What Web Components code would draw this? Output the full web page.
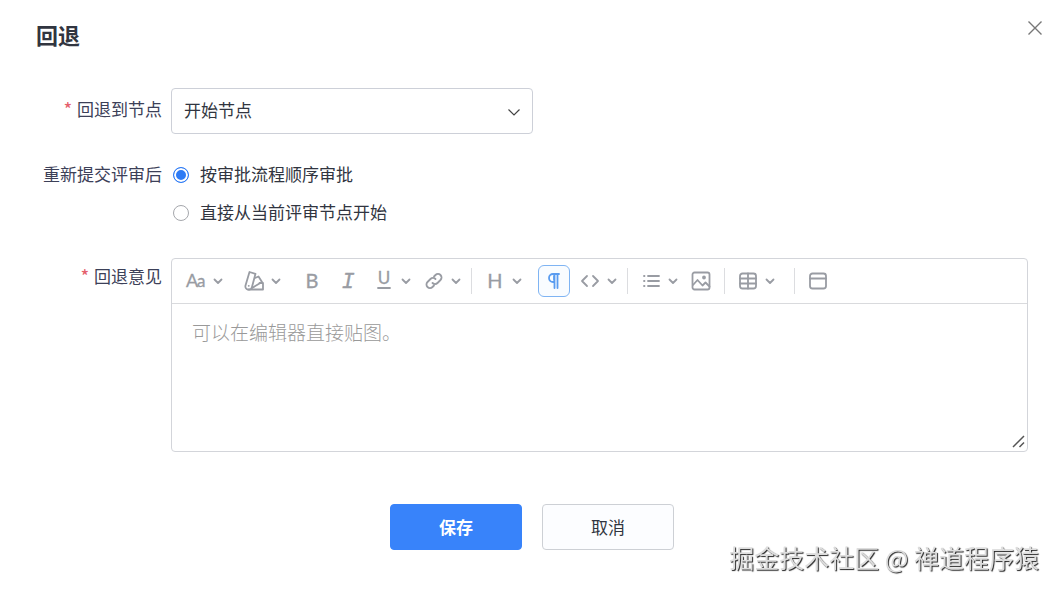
<!DOCTYPE html>
<html lang="zh-CN">
<head>
<meta charset="UTF-8">
<meta name="viewport" content="width=device-width, initial-scale=1">
<title>回退</title>
<style>
    body {
        margin: 0;
        background: #fff;
        color: #313540;
        font-family: "Noto Sans CJK SC", "Noto Sans", sans-serif;
        font-size: 17px;
    }
</style>
</head>
<body>
<rollback-dialog></rollback-dialog>
<water-mark>掘金技术社区 @ 禅道程序猿</water-mark>

<script>
const icons = {
    font: '<text x="0" y="16" font-size="18" font-family="Lato">A</text><text x="11" y="16" font-size="17" font-family="Lato">a</text>',
    color: '<path d="M5.500 1l6 1.800-3.600 13.400A3.300 3.300 0 0 1 1.500 14.500z"/><path d="M11 7l3.500-1.500 3.500 5.500-10 6"/><path d="M15.500 12h3.500v6.500H4.500"/><path d="M4.700 14.800h.1"/>',
    bold: '<text x="10" y="17" font-size="20" text-anchor="middle" font-family="Lato">B</text>',
    italic: '<text x="10" y="17" font-size="22" text-anchor="middle" font-family="Liberation Mono" font-style="italic">I</text>',
    underline: '<text x="10" y="13" font-size="17" text-anchor="middle" font-family="Lato">U</text><path d="M4 17h12"/>',
    link: '<path d="M8.500 12a3.500 3.500 0 0 0 5 0l3-3a3.500 3.500 0 0 0-5-5L10 5.500"/><path d="M11.500 8a3.500 3.500 0 0 0-5 0l-3 3a3.500 3.500 0 0 0 5 5l1.500-1.500"/>',
    heading: '<text x="10" y="17" font-size="20" text-anchor="middle" font-family="Lato">H</text>',
    paragraph: '<path d="M15 3H9a4 4 0 0 0 0 8h1.500M10.500 3v14M13.500 3v14M10 5v4"/>',
    code: '<path d="M7 5l-5 5 5 5M13 5l5 5-5 5"/>',
    list: '<path d="M7 5h11M7 10h11M7 15h11M3 5h.5M3 10h.5M3 15h.5"/>',
    image: '<rect x="1.500" y="1.500" width="17" height="17" rx="2"/><path d="M2 14l4.500-5 5 5.500 3-3 4 4"/><circle cx="13" cy="6.500" r="1"/>',
    table: '<rect x="2" y="2.500" width="16" height="15" rx="2.500"/><path d="M2 7.500h16M2 12.500h16M10 2.500v15"/>',
    panel: '<rect x="2" y="2.500" width="16" height="15" rx="2.500"/><path d="M2 7.500h16"/>'
};

class RollbackDialog extends HTMLElement {
    constructor() {
        super();
        this.attachShadow({ mode: 'open' });
        this.shadowRoot.innerHTML = `
            <style>
                :host { display: block; }
                header {
                    display: flex; justify-content: space-between; align-items: flex-start;
                    padding: 20px 15px 0 36px;
                    margin-bottom: 40px;
                }
                h1 { margin: 0; font-size: 22px; line-height: 28px; color: #313540; }
                .close {
                    display: block; padding: 0; border: 0;
                    background: none; color: #777; cursor: pointer;
                }
                .close svg { display: block; }
                form { padding: 0 30px 0 36px; }
                label, .label { color: #3c4058; }
                .required::before {
                    content: "*"; color: #e5606c;
                    font-weight: 500;
                    margin-right: 5px;
                }
                select {
                    appearance: none;
                    display: block; box-sizing: border-box;
                    width: 100%; height: 46px;
                    padding: 0 40px 4px 12px;
                    border: 1px solid #cdd0d8; border-radius: 4px;
                    background: #fff; color: #313540;
                    font: inherit;
                }
                .option {
                    display: flex; align-items: center;
                    padding-bottom: 2px;
                    line-height: 36px; color: #313540;
                }
                input[type=radio] {
                    appearance: none;
                    box-sizing: border-box;
                    width: 16px; height: 16px;
                    margin: 2px 11px 0 2px;
                    border: 1px solid #a5a7ac; border-radius: 50%;
                }
                input[type=radio]:checked {
                    border-color: #2e7bf5; background: #2e7bf5;
                    box-shadow: inset 0 0 0 2px #fff;
                }
                textarea {
                    display: block; box-sizing: border-box;
                    width: 100%; height: 147px;
                    padding: 15px 20px;
                    border: 0; outline: 0; resize: none; background: none;
                    font: inherit; font-size: 19px; line-height: 26px;
                }
                textarea::placeholder { color: #999; font-weight: 300; }
                footer { display: flex; justify-content: center; gap: 20px; margin-top: 52px; }
            </style>
            <header>
                <h1>回退</h1>
                <button class="close" type="button" aria-label="关闭">
                    <svg width="16" height="16" fill="none" stroke="currentColor" stroke-width="1.4"><path d="M1.500 1.500l13 13M14.500 1.500l-13 13"/></svg>
                </button>
            </header>
            <form>
                <form-row tall>
                    <label slot="label" class="required" for="node">回退到节点</label>
                    <select-box>
                        <select id="node"><option>开始节点</option></select>
                    </select-box>
                </form-row>
                <form-row>
                    <span slot="label" class="label" id="after">重新提交评审后</span>
                    <div role="radiogroup" aria-labelledby="after">
                        <label class="option"><input type="radio" name="after" checked>按审批流程顺序审批</label>
                        <label class="option"><input type="radio" name="after">直接从当前评审节点开始</label>
                    </div>
                </form-row>
                <form-row>
                    <label slot="label" class="required" for="opinion">回退意见</label>
                    <rich-editor>
                        <textarea id="opinion" placeholder="可以在编辑器直接贴图。"></textarea>
                    </rich-editor>
                </form-row>
                <footer>
                    <action-button primary>保存</action-button>
                    <action-button>取消</action-button>
                </footer>
            </form>
        `;
    }
}

class FormRow extends HTMLElement {
    constructor() {
        super();
        this.attachShadow({ mode: 'open' });
        this.shadowRoot.innerHTML = `
            <style>
                :host {
                    display: grid; grid-template-columns: 126px minmax(0, 1fr);
                    column-gap: 9px;
                    margin-bottom: 26px;
                }
                :host([tall]) { margin-bottom: 22px; }
                .name { text-align: right; line-height: 36px; white-space: nowrap; }
                :host([tall]) .name { line-height: 42px; }
            </style>
            <div class="name"><slot name="label"></slot></div>
            <div><slot></slot></div>
        `;
    }
}

class SelectBox extends HTMLElement {
    constructor() {
        super();
        this.attachShadow({ mode: 'open' });
        this.shadowRoot.innerHTML = `
            <style>
                :host { display: block; position: relative; max-width: 362px; }
                svg { position: absolute; right: 12px; top: 17px; pointer-events: none; }
            </style>
            <slot></slot>
            <svg width="14" height="14" fill="none" stroke="#444" stroke-width="1.2"><path d="M1.500 4.500L7 10l5.500-5.500"/></svg>
        `;
    }
}

class ToolButton extends HTMLElement {
    constructor() {
        super();
        this.attachShadow({ mode: 'open' });
    }
    connectedCallback() {
        const icon = icons[this.getAttribute('icon')];
        const arrow = this.hasAttribute('menu')
            ? '<svg width="10" height="10" viewBox="0 0 10 10"><path d="M1.500 3.500L5 7l3.500-3.500"/></svg>'
            : '';
        this.shadowRoot.innerHTML = `
            <style>
                :host { display: block; flex: none; margin-left: 13px; color: #999ca3; }
                :host([gap=s]) { margin-left: 10px; }
                :host([gap=l]) { margin-left: 16px; }
                :host([gap=xl]) { margin-left: 21px; }
                :host([gap=none]) { margin-left: 0; }
                button {
                    display: flex; align-items: center; justify-content: center; gap: 7px;
                    height: 32px; padding: 0;
                    border: 0; background: none; color: inherit; cursor: pointer;
                }
                svg {
                    flex: none; overflow: visible;
                    fill: none; stroke: currentColor; stroke-width: 1.8;
                    stroke-linecap: round; stroke-linejoin: round;
                }
                text { fill: currentColor; stroke-width: 0.3; }
                :host([active]) { color: #5a9cf0; }
                :host([active]) button {
                    width: 32px;
                    border: 1px solid #7fb4f3; border-radius: 6px;
                    background: #f9fcff;
                }
            </style>
            <button type="button" aria-label="${this.getAttribute('name')}">
                <svg width="20" height="20" viewBox="0 0 20 20">${icon}</svg>${arrow}
            </button>
        `;
    }
}

class RichEditor extends HTMLElement {
    constructor() {
        super();
        this.attachShadow({ mode: 'open' });
        this.shadowRoot.innerHTML = `
            <style>
                :host {
                    display: block; position: relative;
                    border: 1px solid #d3d5da; border-radius: 4px;
                }
                .toolbar {
                    display: flex; align-items: center;
                    box-sizing: border-box;
                    height: 45px; padding: 0 14px 1px;
                    border-bottom: 1px solid #d9dadd;
                }
                i { flex: none; width: 1px; height: 26px; margin-left: 10px; background: #dcdde0; }
                .m { margin-left: 13px; }
                .l { margin-left: 19px; }
                .grip { position: absolute; right: 1px; bottom: 3px; pointer-events: none; }
            </style>
            <div class="toolbar" role="toolbar">
                <tool-button icon="font" name="字体" menu gap="none"></tool-button>
                <tool-button icon="color" name="颜色" menu gap="xl"></tool-button>
                <tool-button icon="bold" name="加粗" gap="xl"></tool-button>
                <tool-button icon="italic" name="斜体" gap="l"></tool-button>
                <tool-button icon="underline" name="下划线" menu gap="l"></tool-button>
                <tool-button icon="link" name="链接" menu></tool-button>
                <i></i>
                <tool-button icon="heading" name="标题" menu></tool-button>
                <tool-button icon="paragraph" name="段落" gap="l" active></tool-button>
                <tool-button icon="code" name="代码" menu gap="s"></tool-button>
                <i></i>
                <tool-button icon="list" name="列表" menu></tool-button>
                <tool-button icon="image" name="图片"></tool-button>
                <i class="m"></i>
                <tool-button icon="table" name="表格" menu></tool-button>
                <i class="l"></i>
                <tool-button icon="panel" name="面板"></tool-button>
            </div>
            <slot></slot>
            <svg class="grip" width="14" height="14" fill="none" stroke="#555" stroke-width="1.5"><path d="M1 13L12 2M7.500 13L12 8.500"/></svg>
        `;
    }
}

class ActionButton extends HTMLElement {
    constructor() {
        super();
        this.attachShadow({ mode: 'open' });
        this.shadowRoot.innerHTML = `
            <style>
                :host { display: block; }
                button {
                    height: 46px; min-width: 132px;
                    padding: 0 20px 2px;
                    border: 1px solid #cdd0d5; border-radius: 4px;
                    background: #fcfdff; color: #313540;
                    font: inherit; cursor: pointer;
                }
                :host([primary]) button {
                    border-color: #3883fa; background: #3883fa;
                    color: #fff; font-weight: bold;
                }
            </style>
            <button type="button"><slot></slot></button>
        `;
    }
}

class WaterMark extends HTMLElement {
    constructor() {
        super();
        this.attachShadow({ mode: 'open' });
        this.shadowRoot.innerHTML = `
            <style>
                :host {
                    position: fixed; right: 19px; bottom: 16px;
                    font-size: 25px; line-height: 36px;
                    color: #ddd; text-shadow: 1px 1px 1px #222;
                    pointer-events: none;
                }
            </style>
            <slot></slot>
        `;
    }
}

customElements.define('form-row', FormRow);
customElements.define('select-box', SelectBox);
customElements.define('tool-button', ToolButton);
customElements.define('rich-editor', RichEditor);
customElements.define('action-button', ActionButton);
customElements.define('rollback-dialog', RollbackDialog);
customElements.define('water-mark', WaterMark);
</script>
</body>
</html>
